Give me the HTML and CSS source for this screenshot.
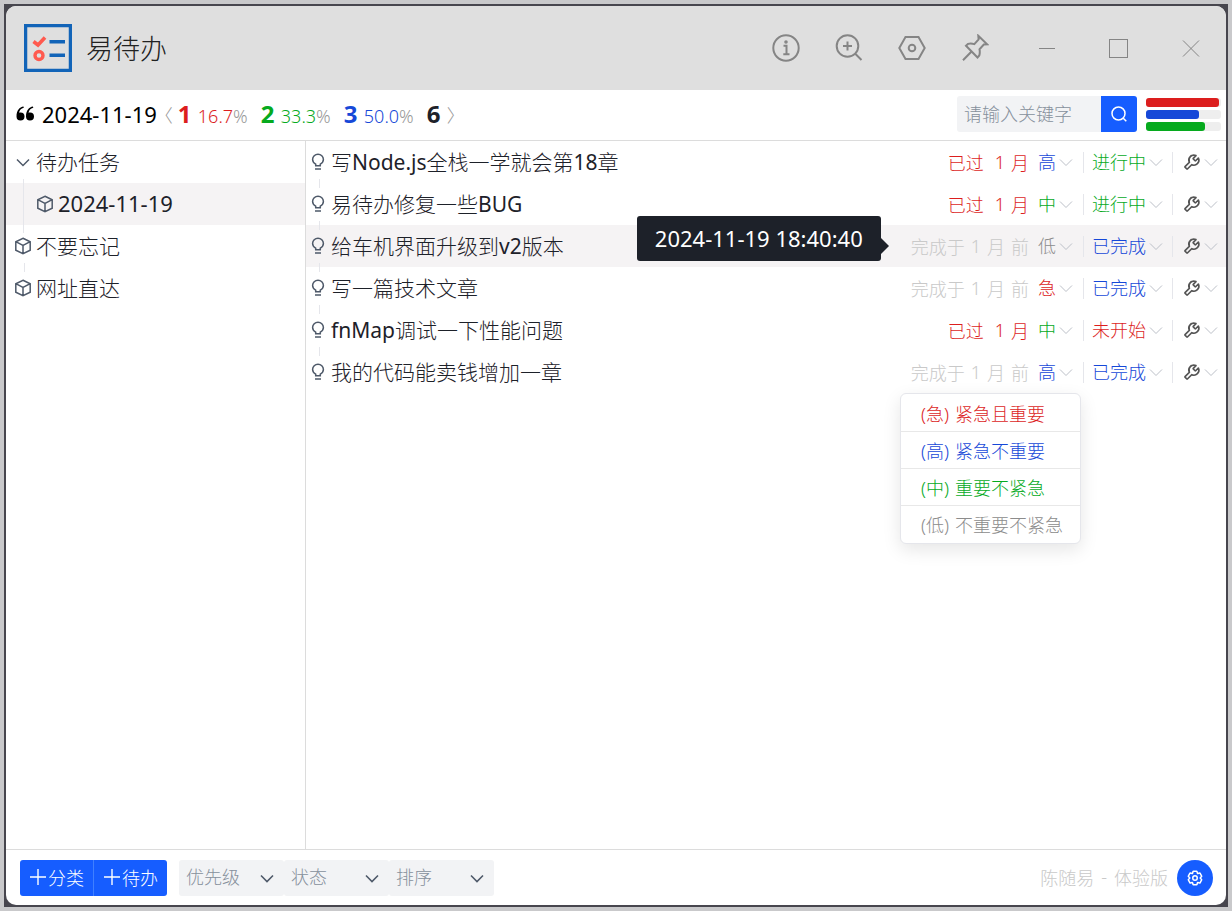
FILE: index.html
```html
<!DOCTYPE html>
<html lang="zh-CN">
<head>
<meta charset="utf-8">
<title>易待办</title>
<link rel="stylesheet" href="styles.css">
</head>
<body>
<svg class="sprite" aria-hidden="true">
  <symbol id="chev" viewBox="0 0 14 14"><path d="M1 4.5l6 6 6-6"/></symbol>
  <symbol id="cube" viewBox="0 0 18 18"><path d="M9 1.300l7.200 3.400v8.500L9 16.700l-7.200-3.500V4.700zM1.800 4.700L9 8.300l7.200-3.600M9 8.300v8.400"/></symbol>
  <symbol id="bulb" viewBox="0 0 14 18"><path d="M4.700 12.700v-1.600C2.900 10.200 1.600 8.600 1.600 6.600a5.400 5.400 0 0 1 10.800 0c0 2-1.300 3.600-3.100 4.500v1.600zM4 16h6"/></symbol>
  <symbol id="wrench" viewBox="0 0 48 48"><path d="M19.994 11.035c3.66-3.659 9.094-4.46 13.531-2.405a.1.1 0 0 1 .028.16l-6.488 6.488a1 1 0 0 0 0 1.414l4.243 4.243a1 1 0 0 0 1.414 0l6.488-6.488a.1.1 0 0 1 .16.028c2.056 4.437 1.254 9.872-2.405 13.53-3.695 3.696-9.2 4.477-13.66 2.347L12.923 40.733a1 1 0 0 1-1.414 0L7.266 36.49a1 1 0 0 1 0-1.414l10.382-10.382c-2.13-4.46-1.349-9.965 2.346-13.66Z"/></symbol>
</svg>
<div class="desk">
<div class="window">
  <header class="titlebar">
    <svg class="logo" viewBox="0 0 48 48"><rect x="1.500" y="1.500" width="45" height="45" fill="none" stroke="#1264b8" stroke-width="3.500"/><path d="M9.500 17.500l4.500 3.500 7-7.500" fill="none" stroke="#ff5a4f" stroke-width="3.600"/><circle cx="15" cy="31.500" r="4" fill="none" stroke="#ff5a4f" stroke-width="3.400"/><path d="M25.500 17.700h15.500M25.500 31.200h15.500" stroke="#1264b8" stroke-width="3.600"/></svg>
    <h1>易待办</h1>
    <div class="tools">
      <button aria-label="关于"><svg viewBox="0 0 28 28"><circle cx="14" cy="14" r="12.700"/><path d="M11.500 11.800h3v8.200M11.300 20.200h6.200"/><circle cx="14" cy="8" r=".8"/></svg></button>
      <button aria-label="放大"><svg viewBox="0 0 28 28"><circle cx="12.500" cy="12" r="10.800"/><path d="M12.500 7.500v9M8 12h9M20 19.500l6.500 6.500"/></svg></button>
      <button aria-label="选项"><svg viewBox="0 0 28 28"><path d="M7.500 3h13l6.200 11-6.200 11h-13L1.300 14z"/><circle cx="14" cy="14" r="3.300"/></svg></button>
      <button aria-label="置顶"><svg viewBox="0 0 28 28"><path d="M17.300 1.800l8.900 8.500-3.400.2-4.300 4.700c.5 2.500.5 4-.2 6.300l-1.800 2L5 11.700l2-1.800c2.300-.7 3.800-.6 6.300.2l4.300-4.600zM10.300 17.700L2 26.300"/></svg></button>
    </div>
    <div class="wincontrols">
      <button aria-label="最小化"><svg viewBox="0 0 28 28"><path d="M6 14.500h16"/></svg></button>
      <button aria-label="最大化"><svg viewBox="0 0 28 28"><rect x="4.500" y="5.500" width="18" height="18"/></svg></button>
      <button aria-label="关闭"><svg viewBox="0 0 28 28"><path d="M6 6.500l16 16M22 6.500l-16 16"/></svg></button>
    </div>
  </header>

  <div class="summary">
    <svg class="quote" viewBox="0 0 18 16"><path d="M7.500.5C3.500 1 .5 4.500.5 10.500a4 4 0 1 0 4-4c-.7 0-1 .1-1.500.3C3.500 4.300 5 2.600 7.800 1.800zM17 .5C13 1 10 4.500 10 10.500a4 4 0 1 0 4-4c-.7 0-1 .1-1.500.3.5-2.500 2-4.200 4.800-5z"/></svg>
    <span class="date">2024-11-19</span>
    <span class="bracket open">〈</span>
    <span class="stat red"><b>1</b><span>16.7<i>%</i></span></span>
    <span class="stat green"><b>2</b><span>33.3<i>%</i></span></span>
    <span class="stat blue"><b>3</b><span>50.0<i>%</i></span></span>
    <b class="total">6</b>
    <span class="bracket">〉</span>
    <form class="search">
      <input type="text" placeholder="请输入关键字" aria-label="关键字">
      <button type="button" aria-label="搜索"><svg viewBox="0 0 18 18"><circle cx="8.500" cy="8.500" r="6.500"/><path d="M13.300 13.300l3 3"/></svg></button>
    </form>
    <div class="bars">
      <div><span class="bg-red" style="width:97%"></span></div>
      <div><span class="bg-blue" style="width:71%"></span></div>
      <div><span class="bg-green" style="width:79%"></span></div>
    </div>
  </div>

  <main class="content">
    <nav class="tree">
      <div class="node link"><svg class="arrow"><use href="#chev"/></svg><span>待办任务</span></div>
      <div class="node child active"><svg><use href="#cube"/></svg><span class="date">2024-11-19</span></div>
      <div class="node link"><svg><use href="#cube"/></svg><span>不要忘记</span></div>
      <div class="node"><svg><use href="#cube"/></svg><span>网址直达</span></div>
    </nav>
    <section class="tasks">
      <div class="task link"><svg class="bulb"><use href="#bulb"/></svg><span class="name">写<span class="latin">Node.js</span>全栈一学就会第<span class="latin">18</span>章</span>
        <span class="time over"><span>已过</span><span class="num">1</span><span>月</span></span>
        <button class="level blue">高<svg><use href="#chev"/></svg></button>
        <button class="status green">进行中<svg><use href="#chev"/></svg></button>
        <button class="ops" aria-label="操作"><svg class="wrench"><use href="#wrench"/></svg><svg><use href="#chev"/></svg></button></div>
      <div class="task link"><svg class="bulb"><use href="#bulb"/></svg><span class="name">易待办修复一些<span class="latin">BUG</span></span>
        <span class="time over"><span>已过</span><span class="num">1</span><span>月</span></span>
        <button class="level green">中<svg><use href="#chev"/></svg></button>
        <button class="status green">进行中<svg><use href="#chev"/></svg></button>
        <button class="ops" aria-label="操作"><svg class="wrench"><use href="#wrench"/></svg><svg><use href="#chev"/></svg></button></div>
      <div class="task link active"><svg class="bulb"><use href="#bulb"/></svg><span class="name">给车机界面升级到<span class="latin">v2</span>版本</span>
        <span class="time done"><span>完成于</span><span class="num">1</span><span>月</span><span>前</span><span class="tooltip" role="tooltip">2024-11-19 18:40:40</span></span>
        <button class="level gray">低<svg><use href="#chev"/></svg></button>
        <button class="status blue">已完成<svg><use href="#chev"/></svg></button>
        <button class="ops" aria-label="操作"><svg class="wrench"><use href="#wrench"/></svg><svg><use href="#chev"/></svg></button></div>
      <div class="task link"><svg class="bulb"><use href="#bulb"/></svg><span class="name">写一篇技术文章</span>
        <span class="time done"><span>完成于</span><span class="num">1</span><span>月</span><span>前</span></span>
        <button class="level red">急<svg><use href="#chev"/></svg></button>
        <button class="status blue">已完成<svg><use href="#chev"/></svg></button>
        <button class="ops" aria-label="操作"><svg class="wrench"><use href="#wrench"/></svg><svg><use href="#chev"/></svg></button></div>
      <div class="task link"><svg class="bulb"><use href="#bulb"/></svg><span class="name"><span class="latin">fnMap</span>调试一下性能问题</span>
        <span class="time over"><span>已过</span><span class="num">1</span><span>月</span></span>
        <button class="level green">中<svg><use href="#chev"/></svg></button>
        <button class="status red">未开始<svg><use href="#chev"/></svg></button>
        <button class="ops" aria-label="操作"><svg class="wrench"><use href="#wrench"/></svg><svg><use href="#chev"/></svg></button></div>
      <div class="task"><svg class="bulb"><use href="#bulb"/></svg><span class="name">我的代码能卖钱增加一章</span>
        <span class="time done"><span>完成于</span><span class="num">1</span><span>月</span><span>前</span></span>
        <div class="dropdown"><button class="level blue">高<svg><use href="#chev"/></svg></button>
          <div class="menu"><button class="red"><span>(急)</span> <span>紧急且重要</span></button><button class="blue"><span>(高)</span> <span>紧急不重要</span></button><button class="green"><span>(中)</span> <span>重要不紧急</span></button><button class="gray"><span>(低)</span> <span>不重要不紧急</span></button></div></div>
        <button class="status blue">已完成<svg><use href="#chev"/></svg></button>
        <button class="ops" aria-label="操作"><svg class="wrench"><use href="#wrench"/></svg><svg><use href="#chev"/></svg></button></div>
    </section>
  </main>

  <footer class="footer">
    <div class="btns">
      <button><svg viewBox="0 0 16 16"><path d="M8 0v16M0 8h16"/></svg>分类</button>
      <button><svg viewBox="0 0 16 16"><path d="M8 0v16M0 8h16"/></svg>待办</button>
    </div>
    <div class="filters">
      <label><select aria-label="优先级"><option>优先级</option></select><svg><use href="#chev"/></svg></label>
      <label><select aria-label="状态"><option>状态</option></select><svg><use href="#chev"/></svg></label>
      <label><select aria-label="排序"><option>排序</option></select><svg><use href="#chev"/></svg></label>
    </div>
    <span class="version"><span>陈随易</span> <span>-</span> <span>体验版</span></span>
    <button class="gear" aria-label="设置"><svg viewBox="0 0 48 48"><path d="M18.797 6.732A1 1 0 0 1 19.760 6h8.480a1 1 0 0 1 .964.732l1.285 4.628a1 1 0 0 0 1.213.700l4.651-1.200a1 1 0 0 1 1.116.468l4.240 7.344a1 1 0 0 1-.153 1.200L38.193 23.300a1 1 0 0 0 0 1.402l3.364 3.427a1 1 0 0 1 .153 1.200l-4.240 7.344a1 1 0 0 1-1.116.468l-4.650-1.200a1 1 0 0 0-1.214.700l-1.285 4.628a1 1 0 0 1-.964.732h-8.480a1 1 0 0 1-.963-.732L17.510 36.640a1 1 0 0 0-1.213-.700l-4.650 1.200a1 1 0 0 1-1.116-.468l-4.240-7.344a1 1 0 0 1 .153-1.200L9.809 24.700a1 1 0 0 0 0-1.402l-3.364-3.427a1 1 0 0 1-.153-1.200l4.240-7.344a1 1 0 0 1 1.116-.468l4.650 1.200a1 1 0 0 0 1.213-.700z"/><circle cx="24" cy="24" r="6"/></svg></button>
  </footer>
</div>
</div>
</body>
</html>
```

FILE: styles.css
```css
* { box-sizing: border-box; }
body {
  margin: 0;
  padding: 4px;
  height: 100vh;
  background: #c9c9cb;
  font-family: "Noto Sans", "Noto Sans CJK SC", sans-serif;
  font-size: 18px;
  font-weight: 300;
  color: #1d2129;
}
button, input, select { font: inherit; color: inherit; border: 0; margin: 0; padding: 0; background: none; }
svg { fill: none; stroke: currentColor; flex: none; }
.sprite { position: absolute; width: 0; height: 0; }
.desk { height: 100%; padding: 2px; background: #47464e; }
.window { height: 100%; display: flex; flex-direction: column; background: #fff; border-radius: 10px; overflow: hidden; }

.red { color: #dc1e1e; }
.green { color: #06aa1e; }
.blue { color: #1648d8; }
.gray { color: #8c8c8c; }
.bg-red { background: #dc1e1e; }
.bg-blue { background: #1648d8; }
.bg-green { background: #06aa1e; }

.titlebar { flex: none; height: 84px; display: flex; align-items: center; padding-left: 18px; background: #dfdfdf; }
.logo { width: 48px; height: 48px; }
h1 { margin: 0 auto 0 14px; padding-top: 2px; font-size: 27px; font-weight: 300; line-height: 40px; color: #222; }
.tools, .wincontrols { display: flex; color: #858585; }
.tools { margin-right: 5px; }
.tools button, .wincontrols button { display: flex; justify-content: center; width: 63px; }
.wincontrols { margin-right: -1px; }
.wincontrols button { width: 72px; }
.tools svg, .wincontrols svg { width: 28px; height: 28px; stroke-width: 2; }
.wincontrols svg { stroke-width: 1; }

.summary { flex: none; height: 51px; display: flex; align-items: center; padding: 0 5px 2px 10px; border-bottom: 1px solid #dcdcdc; }
.quote { width: 18px; height: 16px; margin-right: 8px; fill: #000; stroke: none; }
.date { font-size: 22px; font-weight: 400; }
.summary .date { color: #000; }
.bracket { color: #999; width: 18px; }
.open { margin-left: -2px; }
.stat { display: flex; align-items: baseline; width: 83px; padding-left: 5px; }
.stat b, .total { width: 20px; font-size: 24px; font-weight: 700; line-height: 30px; }
.stat i { font-style: normal; color: #999; }
.total { width: 25px; padding-left: 5px; }
.search { display: flex; margin-left: auto; }
.search input { width: 144px; height: 36px; padding: 0 7px; background: #f2f3f5; border-radius: 3px 0 0 3px; }
.search input::placeholder { color: #86909c; opacity: 1; }
.search button { display: flex; align-items: center; justify-content: center; width: 36px; height: 36px; background: #165dff; color: #fff; border-radius: 0 3px 3px 0; }
.search svg { width: 18px; height: 18px; stroke-width: 1.5; }
.bars { display: grid; gap: 3px; width: 75px; margin-left: 9px; }
.bars div { height: 9px; border-radius: 3px; background: #eee; }
.bars span { display: block; height: 100%; border-radius: 3px; }

.content { flex: 1; min-height: 0; display: flex; }
.tree { width: 300px; border-right: 1px solid #dcdcdc; }
.node, .task { position: relative; display: flex; align-items: center; height: 42px; font-size: 21px; }
.node { padding-left: 8px; gap: 4px; }
.node > span, .name { padding-bottom: 2px; }
.node svg { width: 18px; height: 18px; color: #4e5969; stroke-width: 1.5; }
.node .arrow { width: 18px; height: 14px; }
.child { padding-left: 30px; }
.active { background: #f5f3f4; }
.node.link::after, .task.link::after { content: ""; position: absolute; left: 18px; top: 38px; width: 1px; height: 9px; background: #e5e6eb; z-index: 1; }
.node.link:first-child::after { left: 17px; height: 54px; }
.task.link::after { left: 13px; }

.tasks { flex: 1; }
.task { padding-right: 5px; }
.bulb { width: 14px; height: 18px; margin: 0 6px 0 5px; color: #4e5969; stroke-width: 1.5; }
.name { margin-right: auto; }
.latin { font-weight: 400; }
.time { position: relative; display: flex; align-items: center; height: 42px; font-size: 18px; }
.over { color: #dc1e1e; gap: 6px; }
.over .num { margin-left: 5px; }
.done { color: #c9c9c9; gap: 6px; }
.level, .status, .ops { display: flex; align-items: center; gap: 3px; height: 21px; font-size: 18px; line-height: 20px; }
.level svg, .status svg, .ops svg { width: 14px; height: 14px; color: #bcc0c8; }
.level { padding: 0 10px 0 9px; border-right: 1px solid #e5e6eb; }
.status { padding: 0 9px 0 8px; border-right: 1px solid #e5e6eb; }
.ops { padding: 0 3px 0 9px; gap: 2px; }
.ops .wrench { width: 20px; height: 20px; color: #555; stroke-width: 4; }

.tooltip { position: absolute; right: 100%; top: -9px; margin-right: 30px; padding: 0 18px; height: 45px; line-height: 44px; font-size: 22px; font-weight: 400; color: #fff; white-space: nowrap; background: #1d2129; border-radius: 3px; z-index: 2; }
.tooltip::after { content: ""; position: absolute; left: 100%; top: 22px; border: 8px solid transparent; border-left-color: #1d2129; border-right: 0; }
.dropdown { position: relative; }
.menu { position: absolute; right: 3px; top: 31px; width: 181px; padding-top: 1px; background: #fff; border: 1px solid #e5e6eb; border-radius: 6px; box-shadow: 0 6px 18px rgba(0,0,0,.1); z-index: 3; }
.menu button { display: flex; align-items: center; gap: 6px; width: 100%; height: 37px; padding-left: 20px; font-size: 18px; border-bottom: 1px solid #e8e8e8; }
.menu button:last-child { border: 0; }

.footer { flex: none; height: 56px; display: flex; align-items: center; padding: 0 13px 0 14px; border-top: 1px solid #dcdcdc; }
.btns { display: flex; border-radius: 3px; overflow: hidden; background: #165dff; color: #fff; }
.btns button { display: flex; align-items: center; gap: 2px; height: 36px; padding: 0 9px 2px 10px; }
.btns button + button { border-left: 1px solid #4080ff; }
.btns svg { width: 16px; height: 16px; stroke-width: 1.4; }
.filters { display: flex; margin: 0 auto 0 12px; }
.filters label { position: relative; width: 105px; }
.filters select { appearance: none; width: 100%; height: 36px; padding: 0 30px 2px 7px; background: #f2f3f5; color: #86909c; border-radius: 3px; }
.filters svg { position: absolute; right: 10px; top: 11px; width: 14px; height: 14px; color: #4e5969; stroke-width: 1.6; pointer-events: none; }
.version { display: flex; gap: 7px; padding-bottom: 2px; color: #c9c9c9; margin-right: 9px; }
.gear { display: flex; align-items: center; justify-content: center; width: 36px; height: 36px; border-radius: 50%; background: #165dff; color: #fff; }
.gear svg { width: 18px; height: 18px; stroke-width: 4; }
```
